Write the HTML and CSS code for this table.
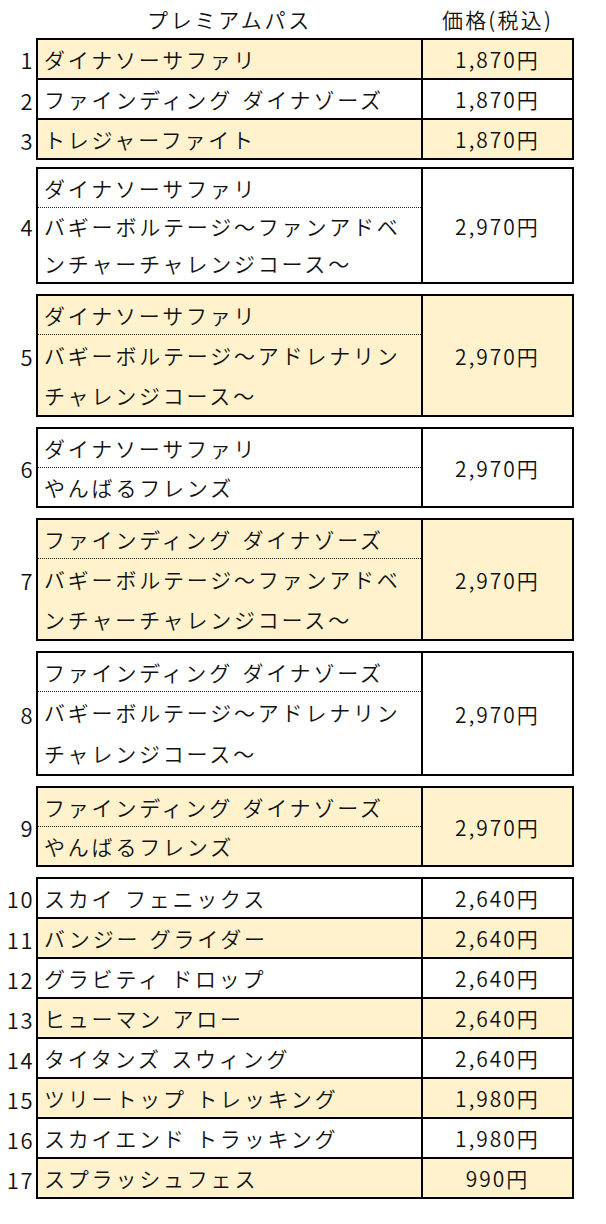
FILE: index.html
```html
<!DOCTYPE html>
<html lang="ja">
<head>
<meta charset="utf-8">
<title>プレミアムパス</title>
<link rel="stylesheet" href="styles.css">
</head>
<body>
<main class="sheet">
  <div class="head">
    <div class="h-name">プレミアムパス</div>
    <div class="h-price">価格(税込)</div>
  </div>
  <div class="groups">
    <section class="group g-first">
      <div class="row cream"><div class="num">1</div><div class="cells"><div class="name">ダイナソーサファリ</div><div class="price">1,870円</div></div></div>
      <div class="row"><div class="num">2</div><div class="cells"><div class="name">ファインディング ダイナゾーズ</div><div class="price">1,870円</div></div></div>
      <div class="row cream"><div class="num">3</div><div class="cells"><div class="name">トレジャーファイト</div><div class="price">1,870円</div></div></div>
    </section>

    <section class="group">
      <div class="row"><div class="num">4</div><div class="cells"><div class="name multi"><div class="first">ダイナソーサファリ</div><div class="rest r37">バギーボルテージ〜ファンアドベ<br>ンチャーチャレンジコース〜</div></div><div class="price">2,970円</div></div></div>
    </section>

    <section class="group">
      <div class="row cream"><div class="num">5</div><div class="cells"><div class="name multi"><div class="first">ダイナソーサファリ</div><div class="rest r40">バギーボルテージ〜アドレナリン<br>チャレンジコース〜</div></div><div class="price">2,970円</div></div></div>
    </section>

    <section class="group">
      <div class="row"><div class="num">6</div><div class="cells"><div class="name multi"><div class="first">ダイナソーサファリ</div><div class="rest r38">やんばるフレンズ</div></div><div class="price">2,970円</div></div></div>
    </section>

    <section class="group">
      <div class="row cream"><div class="num">7</div><div class="cells"><div class="name multi"><div class="first">ファインディング ダイナゾーズ</div><div class="rest r40">バギーボルテージ〜ファンアドベ<br>ンチャーチャレンジコース〜</div></div><div class="price">2,970円</div></div></div>
    </section>

    <section class="group">
      <div class="row"><div class="num">8</div><div class="cells"><div class="name multi"><div class="first">ファインディング ダイナゾーズ</div><div class="rest r41">バギーボルテージ〜アドレナリン<br>チャレンジコース〜</div></div><div class="price">2,970円</div></div></div>
    </section>

    <section class="group">
      <div class="row cream"><div class="num">9</div><div class="cells"><div class="name multi"><div class="first">ファインディング ダイナゾーズ</div><div class="rest r38">やんばるフレンズ</div></div><div class="price">2,970円</div></div></div>
    </section>

    <section class="group">
      <div class="row"><div class="num">10</div><div class="cells"><div class="name">スカイ フェニックス</div><div class="price">2,640円</div></div></div>
      <div class="row cream"><div class="num">11</div><div class="cells"><div class="name">バンジー グライダー</div><div class="price">2,640円</div></div></div>
      <div class="row"><div class="num">12</div><div class="cells"><div class="name">グラビティ ドロップ</div><div class="price">2,640円</div></div></div>
      <div class="row cream"><div class="num">13</div><div class="cells"><div class="name">ヒューマン アロー</div><div class="price">2,640円</div></div></div>
      <div class="row"><div class="num">14</div><div class="cells"><div class="name">タイタンズ スウィング</div><div class="price">2,640円</div></div></div>
      <div class="row cream"><div class="num">15</div><div class="cells"><div class="name">ツリートップ トレッキング</div><div class="price">1,980円</div></div></div>
      <div class="row"><div class="num">16</div><div class="cells"><div class="name">スカイエンド トラッキング</div><div class="price">1,980円</div></div></div>
      <div class="row cream"><div class="num">17</div><div class="cells"><div class="name">スプラッシュフェス</div><div class="price">990円</div></div></div>
    </section>
  </div>
</main>
</body>
</html>
```

FILE: styles.css
```css
html, body {
  margin: 0;
  padding: 0;
  background: #ffffff;
}

body {
  font-family: "Noto Sans CJK JP", "Noto Sans", sans-serif;
  font-size: 21px;
  font-weight: 350;
  letter-spacing: 2.8px;
  word-spacing: 2px;
  color: #111111;
}

.sheet {
  width: 606px;
}

.head {
  display: grid;
  grid-template-columns: 38px 383px 2px 149px;
  height: 38px;
  align-items: center;
}

.h-name {
  grid-column: 2;
  text-align: center;
}

.h-price {
  grid-column: 4;
  text-align: center;
  letter-spacing: 2.2px;
}

.groups {
  display: flex;
  flex-direction: column;
  gap: 10px;
}

.g-first {
  margin-bottom: -3px;
}

.group {
  display: flex;
  flex-direction: column;
}

.row {
  display: flex;
}

.num {
  width: 36px;
  flex: none;
  box-sizing: border-box;
  padding-right: 2px;
  display: flex;
  align-items: center;
  justify-content: flex-end;
  font-size: 22px;
  letter-spacing: 1.5px;
}

.cells {
  display: grid;
  grid-template-columns: 383px 151px;
  border: 2px solid #000000;
}

.row + .row .cells {
  border-top: none;
}

.cream .cells {
  background: #fff2cc;
}

.name {
  padding-left: 6px;
  height: 38px;
  line-height: 38px;
  white-space: nowrap;
}

.name.multi {
  height: auto;
  padding-left: 0;
  display: flex;
  flex-direction: column;
}

.first {
  height: 38px;
  line-height: 38px;
  padding-left: 6px;
  border-bottom: 1px dotted #222222;
}

.rest {
  padding-left: 6px;
}

.r37 { line-height: 37px; }
.r38 { line-height: 38px; }
.r40 { line-height: 40px; }
.r41 { line-height: 41px; }

.price {
  border-left: 2px solid #000000;
  display: flex;
  align-items: center;
  justify-content: center;
  letter-spacing: 2px;
}
```
